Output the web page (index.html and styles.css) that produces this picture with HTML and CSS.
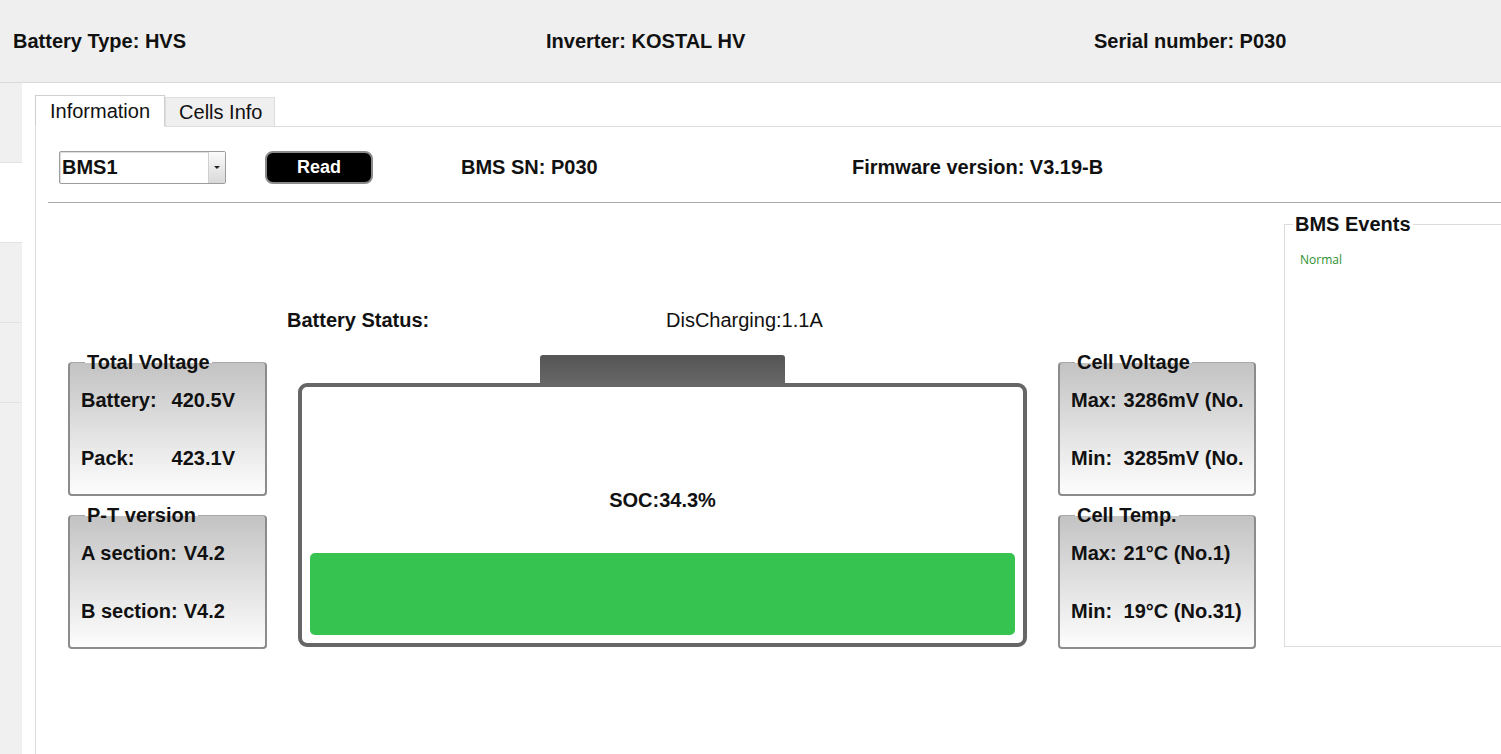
FILE: index.html
```html
<!DOCTYPE html>
<html lang="en">
<head>
  <meta charset="UTF-8">
  <title>BMS Information</title>
  <link rel="stylesheet" href="styles.css">
</head>
<body>

  <header class="topbar">
    <div>Battery Type: HVS</div>
    <div>Inverter: KOSTAL HV</div>
    <div>Serial number: P030</div>
  </header>

  <div class="layout">
    <nav class="sidebar">
      <div class="nav-item"></div>
      <div class="nav-item active"></div>
      <div class="nav-item"></div>
      <div class="nav-item"></div>
    </nav>

    <main class="content">
      <div class="tabs">
        <div class="tab active">Information</div>
        <div class="tab">Cells Info</div>
      </div>

      <div class="tab-panel">
        <div class="toolbar">
          <div class="select">
            <span class="select-value">BMS1</span>
            <span class="select-arrow"></span>
          </div>
          <button class="btn-read">Read</button>
          <span class="bms-sn">BMS SN: P030</span>
          <span class="firmware">Firmware version: V3.19-B</span>
        </div>

        <div class="dashboard">
          <div class="side-col">
            <fieldset class="box">
              <legend>Total Voltage</legend>
              <div class="rows">
                <span>Battery:</span><span>420.5V</span>
                <span>Pack:</span><span>423.1V</span>
              </div>
            </fieldset>
            <fieldset class="box">
              <legend>P-T version</legend>
              <div class="rows narrow">
                <span>A section:</span><span>V4.2</span>
                <span>B section:</span><span>V4.2</span>
              </div>
            </fieldset>
          </div>

          <div class="battery-col">
            <div class="status">
              <span class="status-label">Battery Status:</span>
              <span class="status-value">DisCharging:1.1A</span>
            </div>
            <div class="battery">
              <div class="battery-cap"></div>
              <div class="battery-body">
                <div class="soc">SOC:34.3%</div>
                <div class="battery-level"></div>
              </div>
            </div>
          </div>

          <div class="side-col right">
            <fieldset class="box">
              <legend>Cell Voltage</legend>
              <div class="rows tight">
                <span>Max:</span><span>3286mV (No.12)</span>
                <span>Min:</span><span>3285mV (No.27)</span>
              </div>
            </fieldset>
            <fieldset class="box">
              <legend>Cell Temp.</legend>
              <div class="rows tight">
                <span>Max:</span><span>21°C (No.1)</span>
                <span>Min:</span><span>19°C (No.31)</span>
              </div>
            </fieldset>
          </div>

          <fieldset class="events">
            <legend>BMS Events</legend>
            <p class="event-normal">Normal</p>
          </fieldset>
        </div>
      </div>
    </main>
  </div>

</body>
</html>
```

FILE: styles.css
```css
:root {
  --grey-bg: #efefef;
  --line: #dddddd;
  --text: #111;
  --font: 'Liberation Sans', Arial, sans-serif;
}

body {
  margin: 0;
  width: 1501px;
  height: 754px;
  overflow: hidden;
  font-family: var(--font);
  font-size: 20px;
  color: var(--text);
  background: #fff;
}

/* top bar */
.topbar {
  display: grid;
  grid-template-columns: 533px 548px 1fr;
  align-items: center;
  height: 82px;
  padding-left: 13px;
  background: var(--grey-bg);
  border-bottom: 1px solid #d9d9d9;
  font-weight: bold;
}

.layout {
  display: flex;
  height: 671px;
  overflow: hidden;
}

/* left menu strip */
.sidebar {
  width: 22px;
  flex: none;
  background: #f0f0f0;
}

.nav-item {
  height: 79px;
  border-bottom: 1px solid #e2e2e2;
}

.nav-item.active {
  background: #fff;
}

.content {
  flex: 1;
  min-width: 0;
  padding: 12px 0 0 13px;
}

/* tabs */
.tabs {
  display: flex;
  align-items: flex-end;
  border-bottom: 1px solid var(--line);
}

.tab {
  height: 28px;
  line-height: 28px;
  padding: 0 12px 0 13px;
  background: var(--grey-bg);
  border: 1px solid var(--line);
  border-bottom: none;
}

.tab.active {
  height: 30px;
  line-height: 30px;
  padding: 0 14px;
  background: #fff;
  border-color: #cfcfcf;
  border-bottom: 1px solid #fff;
  margin-bottom: -1px;
}

.tab-panel {
  border-left: 1px solid var(--line);
  height: 700px;
}

/* toolbar */
.toolbar {
  display: flex;
  align-items: center;
  margin-left: 12px;
  padding: 24px 0 18px 11px;
  border-bottom: 1px solid #aaa;
  font-weight: bold;
}

.select {
  display: flex;
  width: 167px;
  height: 33px;
  box-sizing: border-box;
  border: 1px solid #9c9c9c;
  border-radius: 2px;
  box-shadow: inset 1px 1px 1px #ddd;
}

.select-value {
  flex: 1;
  line-height: 31px;
  padding-left: 2px;
}

.select-arrow {
  width: 16px;
  border-left: 1px solid #cfcfcf;
  background: linear-gradient(#fbfbfb, #d9d9d9);
  display: flex;
  align-items: center;
  justify-content: center;
}

.select-arrow::after {
  content: "";
  border-left: 3px solid transparent;
  border-right: 3px solid transparent;
  border-top: 3px solid #222;
}

.btn-read {
  margin-left: 39px;
  width: 108px;
  height: 33px;
  background: #000;
  color: #fff;
  border: 2px solid #8a8a8a;
  border-radius: 8px;
  font-family: var(--font);
  font-weight: bold;
  font-size: 18px;
}

.bms-sn {
  margin-left: 88px;
  width: 391px;
}

/* dashboard */
.dashboard {
  display: flex;
  align-items: flex-start;
  padding-left: 32px;
}

.side-col {
  flex: none;
  width: 199px;
  margin-top: 148px;
}

.side-col.right {
  width: 198px;
  margin-left: 31px;
}

.box {
  margin: 0;
  padding: 16px 11px 25px 11px;
  border: 2px solid #8c8c8c;
  border-top: 1px solid #a8a8a8;
  border-radius: 4px;
  background: linear-gradient(#c3c3c3, #fdfdfd);
  min-width: 0;
}

.box + .box {
  margin-top: 8px;
}

.box legend {
  margin-left: 4px;
  padding: 0 2px;
  line-height: 22px;
  font-weight: bold;
}

.rows {
  display: grid;
  grid-template-columns: auto 1fr;
  column-gap: 15px;
  row-gap: 36px;
  line-height: 22px;
  font-weight: bold;
  white-space: nowrap;
  overflow: hidden;
}

.rows.narrow {
  column-gap: 6px;
}

.rows.tight {
  column-gap: 7px;
}

/* battery graphic */
.battery-col {
  flex: none;
  width: 740px;
  margin-left: 20px;
  margin-top: 106px;
}

.status {
  display: grid;
  grid-template-columns: 379px auto;
  line-height: 22px;
}

.status-label {
  font-weight: bold;
}

.battery {
  margin-left: 11px;
  width: 729px;
}

.battery-cap {
  width: 245px;
  height: 29px;
  margin: 24px auto -1px;
  background: linear-gradient(#555, #676767);
  border-radius: 3px 3px 0 0;
}

.battery-body {
  display: flex;
  flex-direction: column;
  height: 264px;
  box-sizing: border-box;
  padding: 8px;
  border: 4px solid #666;
  border-radius: 9px;
  background: #fff;
}

.soc {
  margin-top: 94px;
  line-height: 22px;
  text-align: center;
  font-weight: bold;
}

.battery-level {
  margin-top: auto;
  height: 82px;
  background: #37c34f;
  border-radius: 5px;
}

/* events */
.events {
  flex: none;
  width: 260px;
  height: 434px;
  box-sizing: border-box;
  margin: 10px 0 0 28px;
  padding: 17px 8px 0 8px;
  border: 1px solid #dcdcdc;
}

.events legend {
  padding: 0 2px;
  line-height: 22px;
  font-weight: bold;
}

.event-normal {
  margin: 0 0 0 7px;
  font-family: 'Open Sans', sans-serif;
  font-size: 12px;
  line-height: 16px;
  color: #2f8f2f;
}
```
